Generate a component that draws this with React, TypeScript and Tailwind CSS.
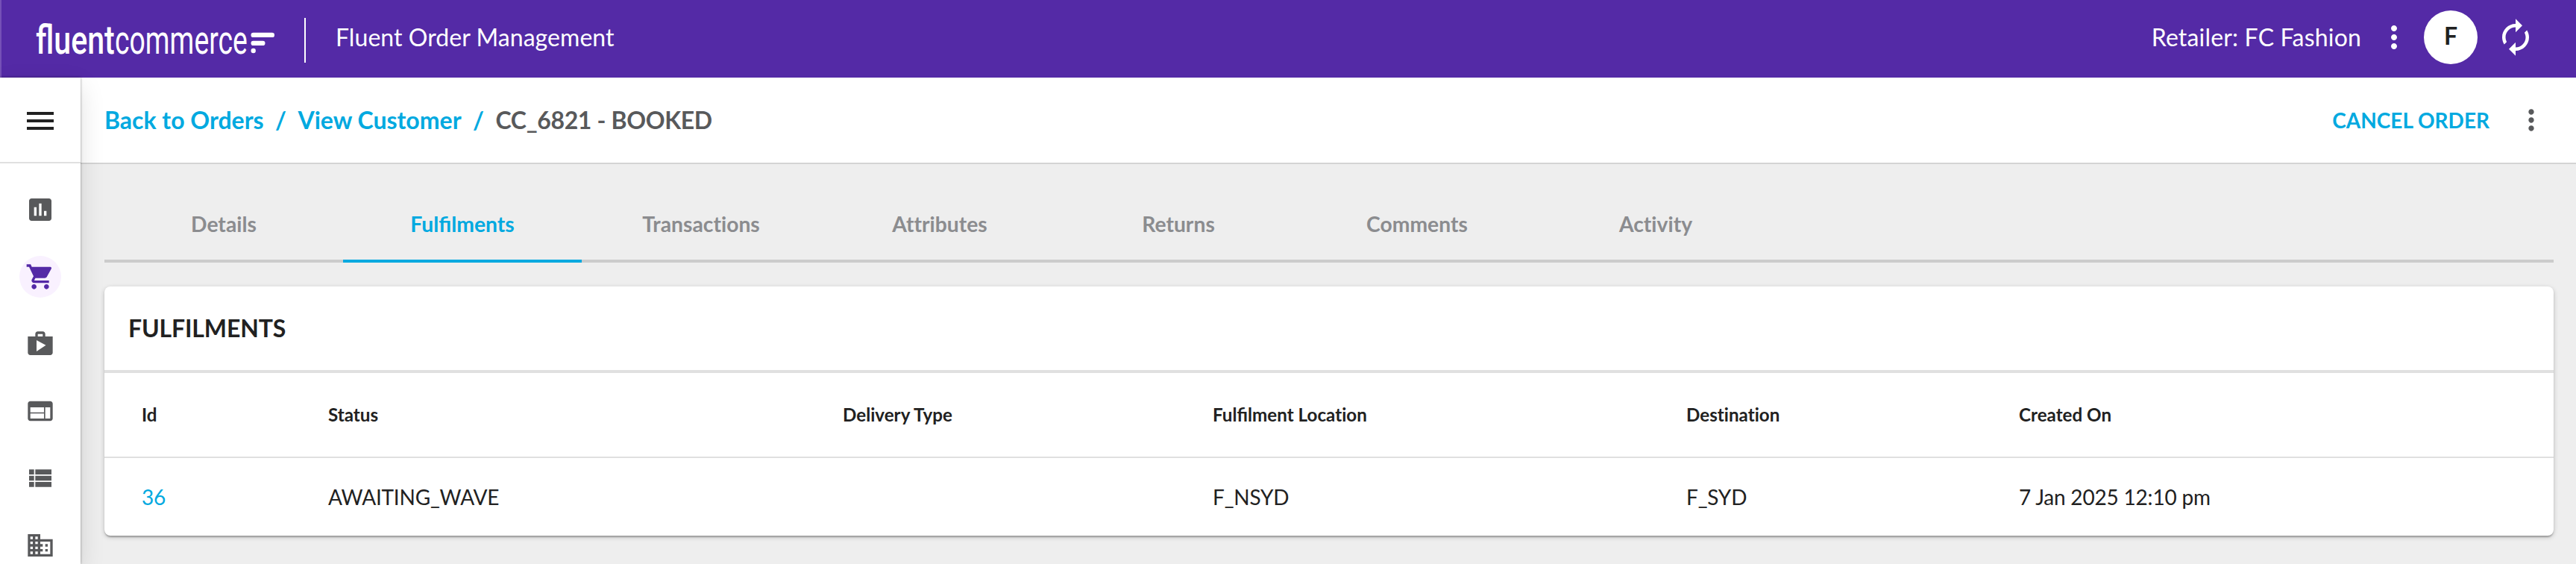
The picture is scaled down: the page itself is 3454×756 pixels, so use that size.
import React from 'react';
import {
  MdAssessment,
  MdAutorenew,
  MdDomain,
  MdMenu,
  MdMoreVert,
  MdShop,
  MdShoppingCart,
  MdWeb,
} from 'react-icons/md';
import { clsx } from 'clsx';

function ViewListIcon({ size }: { size: number }) {
  return (
    <svg width={size} height={size} viewBox="0 0 24 24" fill="currentColor">
      <path d="M3 14h4v-4H3v4zm0 5h4v-4H3v4zM3 9h4V5H3v4zm5 5h13v-4H8v4zm0 5h13v-4H8v4zM8 5v4h13V5H8z" />
    </svg>
  );
}

function Logo() {
  return (
    <svg width="324" height="80" viewBox="0 -10 324 80" fill="#fff" className="shrink-0 overflow-visible font-[Roboto,sans-serif]">
      <text transform="translate(0 50) scale(0.775 1)" fontSize="53" fontWeight="500">fluent</text>
      <text transform="translate(106 50) scale(0.705 1)" fontSize="53" fontWeight="400">commerce</text>
      <rect x="288.5" y="21.7" width="31.5" height="6.4" rx="3.2" />
      <rect x="288.5" y="32.8" width="19" height="6.2" rx="3.1" />
      <circle cx="291.7" cy="46" r="3.2" />
    </svg>
  );
}

// Lato joins "ti" as well as "fi"; only the "fi" ligature is wanted in labels
function Label({ text }: { text: string }) {
  return (
    <span className="whitespace-pre">
      {text.split(/(?<= )/).map((word) => (
        <span key={word} className={clsx(!word.includes('fi') && '[font-variant-ligatures:none]')}>
          {word}
        </span>
      ))}
    </span>
  );
}

const navItems = [
  { name: 'insights', icon: MdAssessment },
  { name: 'orders', icon: MdShoppingCart, active: true },
  { name: 'store', icon: MdShop },
  { name: 'web', icon: MdWeb },
  { name: 'lists', icon: ViewListIcon },
  { name: 'locations', icon: MdDomain },
];

const tabs = ['Details', 'Fulfilments', 'Transactions', 'Attributes', 'Returns', 'Comments', 'Activity'];

const columns = ['Id', 'Status', 'Delivery Type', 'Fulfilment Location', 'Destination', 'Created On'];

const rows = [['36', 'AWAITING_WAVE', '', 'F_NSYD', 'F_SYD', '7 Jan 2025 12:10 pm']];

const rowGrid = 'grid grid-cols-[250px_690px_496px_635px_446px_1fr] items-center pl-[50px]';

export default function App() {
  return (
    <div className="flex h-[756px] w-[3454px] flex-col overflow-hidden bg-[#eeeeee] font-[Lato,sans-serif] text-[#212121]">
      {/* App bar */}
      <header className="flex h-[104px] shrink-0 items-center border-l-2 border-[#7550b7] bg-[#542aa6] pl-[46px] text-white">
        <Logo />
        <div className="ml-9 mt-1 h-[60px] w-0.5 bg-white" />
        <h1 className="ml-10 pb-1 text-[32px] leading-none tracking-[0.06px]">Fluent Order Management</h1>
        <div className="ml-auto flex h-full items-center pb-1 pr-[54px]">
          <span className="text-[32px] leading-none tracking-[0.18px]">Retailer: FC Fashion</span>
          <MdMoreVert size={48} className="ml-5" />
          <div className="ml-4 flex size-[72px] items-center justify-center rounded-full bg-white pb-1 text-[32px] font-bold leading-none text-[#212121]">
            F
          </div>
          <MdAutorenew size={54} className="ml-6" />
        </div>
      </header>

      <div className="flex min-h-0 flex-1">
        {/* Side navigation */}
        <aside className="z-10 flex w-[108px] shrink-0 flex-col bg-white shadow-[0_0_3px_rgba(0,0,0,0.4),0_12px_32px_rgba(0,0,0,0.12)]">
          <button className="flex h-[115px] shrink-0 items-center justify-center border-b-2 border-[#e0e0e0] pt-[3px]">
            <MdMenu size={48} />
          </button>
          <nav className="flex flex-col items-center gap-[34px] pt-[34px] text-[#58595b]">
            {navItems.map((item) => (
              <a
                key={item.name}
                className={clsx(
                  'flex size-14 shrink-0 items-center justify-center rounded-full',
                  item.active && 'bg-[#f9f1ff] text-[#542aa6]'
                )}
              >
                <item.icon size={40} />
              </a>
            ))}
          </nav>
        </aside>

        <main className="flex min-w-0 flex-1 flex-col">
          {/* Breadcrumbs */}
          <div className="flex h-[116px] shrink-0 items-center border-b-2 border-[#d4d4d4] bg-white pl-8 pr-[38px]">
            <div className="flex items-center gap-[15.5px] text-[32px] font-bold leading-none text-[#00a9e0]">
              <a>Back to Orders</a>
              <span>/</span>
              <a>View Customer</a>
              <span>/</span>
              <span className="tracking-[-0.35px] text-[#58595b]">CC_6821 - BOOKED</span>
            </div>
            <button className="ml-auto text-[28px] font-bold leading-none text-[#00a9e0]">CANCEL ORDER</button>
            <MdMoreVert size={44} className="ml-[34px] text-[#58595b]" />
          </div>

          <div className="px-8 pr-[30px]">
            {/* Tabs */}
            <div className="flex h-[132px] border-b-4 border-[#cccccc]">
              {tabs.map((tab) => (
                <button
                  key={tab}
                  className={clsx(
                    'mb-[-4px] flex w-80 items-center justify-center border-b-4 pt-8 text-[28.3px] font-bold leading-none',
                    tab === 'Fulfilments' ? 'border-[#00a9e0] text-[#00a9e0]' : 'border-transparent text-[#8b8c8f]'
                  )}
                >
                  <Label text={tab} />
                </button>
              ))}
            </div>

            {/* Fulfilments table */}
            <section className="mt-8 overflow-hidden rounded-lg bg-white shadow-[0_2px_6px_rgba(0,0,0,0.2),0_2px_2px_rgba(0,0,0,0.14),0_4px_2px_-2px_rgba(0,0,0,0.12)]">
              <h2 className="flex h-28 items-center px-8 text-[32px] font-bold leading-none tracking-[-0.15px]">FULFILMENTS</h2>
              <div className={clsx(rowGrid, 'h-[118px] border-b-2 border-t-4 border-[#e0e0e0] text-[24.2px] font-bold leading-none')}>
                {columns.map((column) => (
                  <Label key={column} text={column} />
                ))}
              </div>
              {rows.map((row) => (
                <div key={row[0]} className={clsx(rowGrid, 'h-[104px] text-[28px] leading-none tracking-[-0.2px]')}>
                  {row.map((cell, i) => (
                    <span key={columns[i]} className={clsx(i === 0 && 'text-[#00a9e0]')}>
                      {cell}
                    </span>
                  ))}
                </div>
              ))}
            </section>
          </div>
        </main>
      </div>
    </div>
  );
}
